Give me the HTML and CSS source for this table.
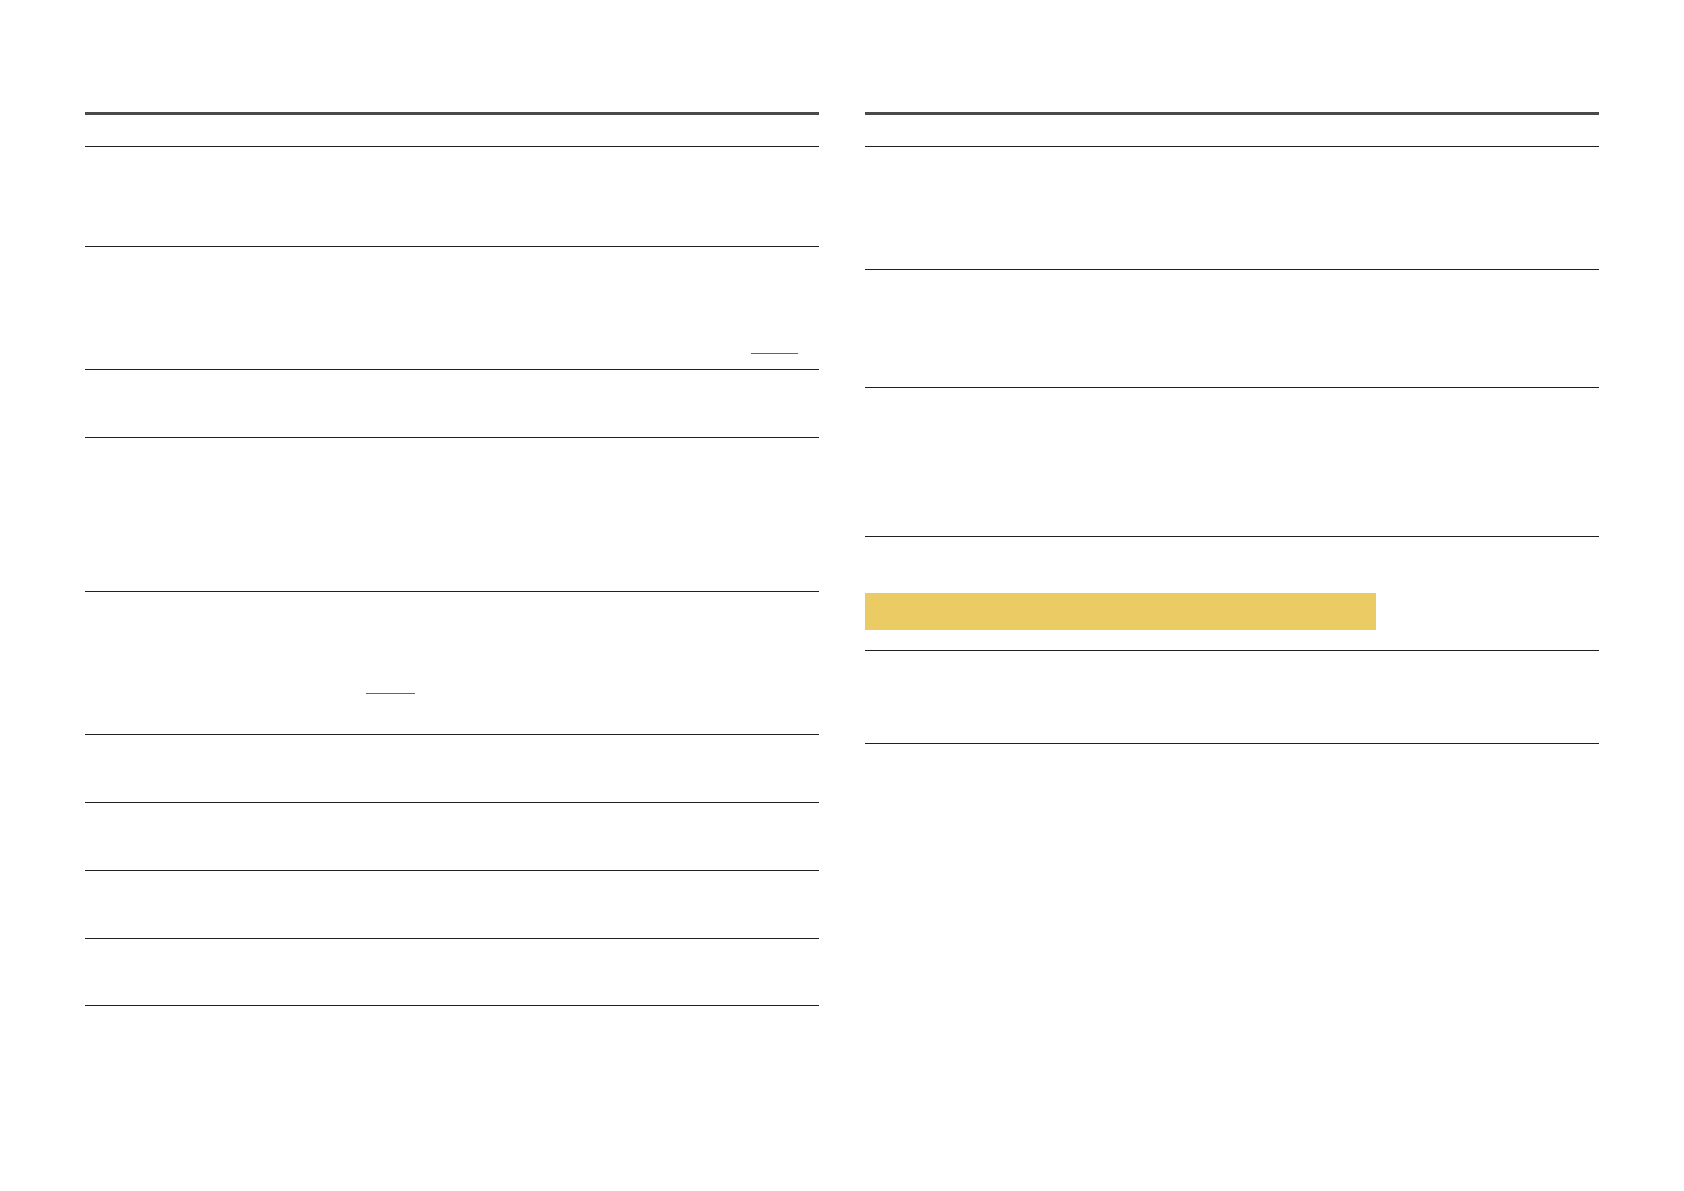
FILE: index.html
```html
<!DOCTYPE html>
<html lang="en">
<head>
<meta charset="utf-8">
<title>Page</title>
<link rel="stylesheet" href="styles.css">
</head>
<body>
<main class="page">
  <section class="col">
    <div class="row h31"></div>
    <div class="row h99"></div>
    <div class="row h122 link-row-a"><span class="link link-a"></span></div>
    <div class="row h67"></div>
    <div class="row h153"></div>
    <div class="row h142 link-row-b"><span class="link link-b"></span></div>
    <div class="row h67"></div>
    <div class="row h67"></div>
    <div class="row h67"></div>
    <div class="row h66"></div>
  </section>
  <section class="col">
    <div class="row h31"></div>
    <div class="row h122"></div>
    <div class="row h117"></div>
    <div class="row h148"></div>
    <div class="row h113 note-row"><div class="note"></div></div>
    <div class="row h92"></div>
  </section>
</main>
</body>
</html>
```

FILE: styles.css
```css
html, body {
  margin: 0;
  padding: 0;
  background: #ffffff;
  font-family: "Liberation Sans", Arial, sans-serif;
}

.page {
  display: flex;
  align-items: flex-start;
  gap: 46px;
  padding: 112px 0 0 85px;
}

.col {
  width: 734px;
  border-top: 3px solid #4a4a4a;
  display: flex;
  flex-direction: column;
}

.row {
  box-sizing: content-box;
  border-bottom: 1px solid #231f20;
}

.h31 { height: 31px; }
.h66 { height: 66px; }
.h67 { height: 67px; }
.h92 { height: 92px; }
.h99 { height: 99px; }
.h113 { height: 113px; }
.h117 { height: 117px; }
.h122 { height: 122px; }
.h142 { height: 142px; }
.h148 { height: 148px; }
.h153 { height: 153px; }

.link-row-a, .link-row-b, .note-row {
  box-sizing: border-box;
}

.link-row-a {
  height: 123px;
  padding-top: 106px;
}

.link-row-b {
  height: 143px;
  padding-top: 101px;
}

.link {
  display: block;
  height: 0;
  border-bottom: 1px solid #1b7ac6;
}

.link-a {
  margin-left: 666px;
  width: 47px;
}

.link-b {
  margin-left: 281px;
  width: 49px;
}

.note-row {
  height: 114px;
  padding-top: 56px;
}

.note {
  width: 511px;
  height: 37px;
  background: #ebcb64;
}
```
